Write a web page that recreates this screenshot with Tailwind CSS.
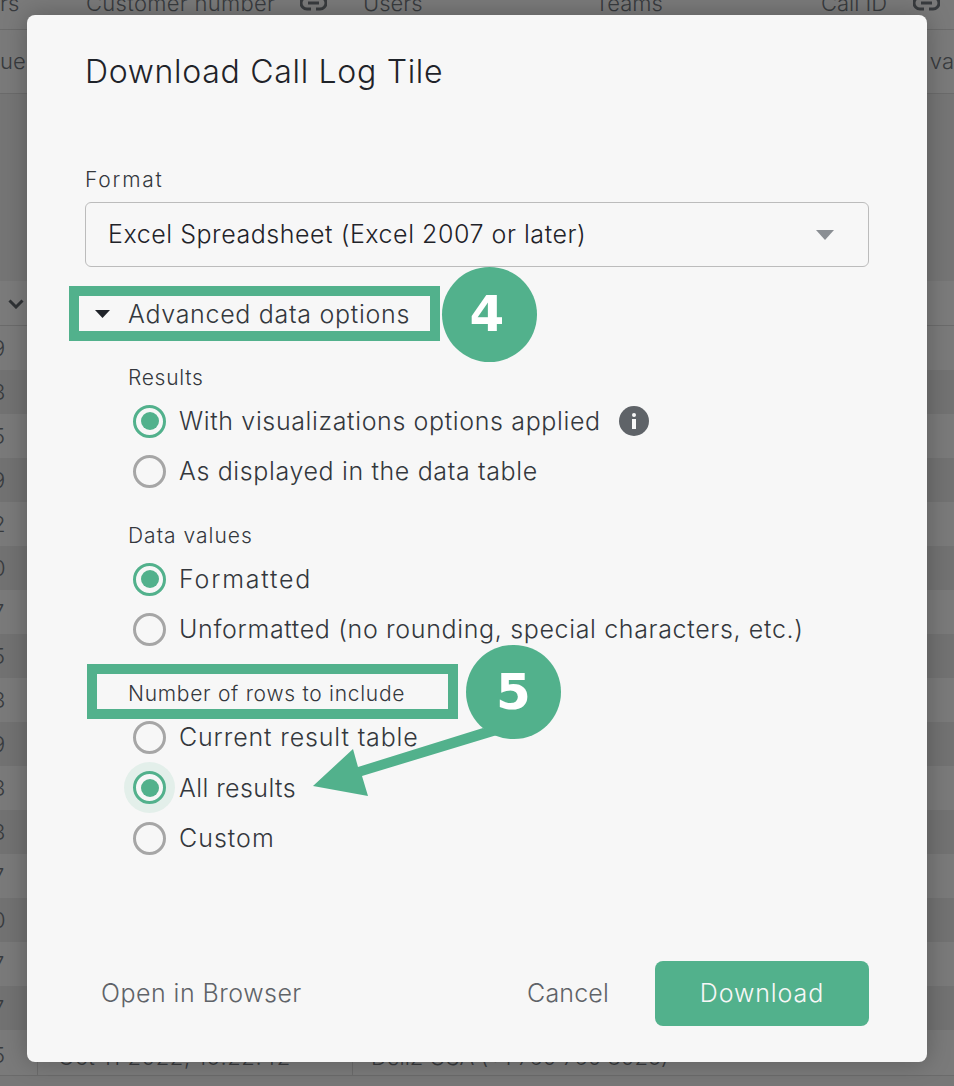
<!DOCTYPE html>
<html lang="en">
<head>
    <meta charset="UTF-8">
    <meta name="viewport" content="width=device-width, initial-scale=1.0">
    <title>Download Call Log Tile</title>
    <script src="https://cdn.jsdelivr.net/npm/@tailwindcss/browser@4"></script>
</head>
<body class="bg-[#777777] font-['Inter',sans-serif] font-light">
<div class="relative w-[954px] h-[1086px] overflow-hidden">

    <!-- table behind the modal -->
    <div class="text-[22px] text-[#383b3e]">
        <div class="relative h-[42px] -mt-[12px] border-b border-[#6b6b6b] bg-[#7a7a7a] leading-[30px] whitespace-nowrap flex">
            <span class="w-[86px] text-right pr-[70px]">rs</span>
            <span class="w-[214px] tracking-[0.3px]">Customer number</span>
            <svg class="mt-[5px] w-[63px] pr-[36px]" height="20" viewBox="0 0 27 20" fill="none" stroke="#383b3e" stroke-width="3"><path d="M11 4H7a6 6 0 0 0 0 12h4M16 4h4a6 6 0 0 1 0 12h-4M8 10h11"/></svg>
            <span class="w-[232px]">Users</span>
            <span class="w-[226px]">Teams</span>
            <span class="w-[92px]">Call ID</span>
            <svg class="mt-[5px]" width="27" height="20" viewBox="0 0 27 20" fill="none" stroke="#383b3e" stroke-width="3"><path d="M11 4H7a6 6 0 0 0 0 12h4M16 4h4a6 6 0 0 1 0 12h-4M8 10h11"/></svg>
        </div>
        <div class="flex items-center justify-between h-[64px] border-b border-[#6b6b6b] bg-[#7a7a7a]">
            <span>ue</span><span>va</span>
        </div>
        <div class="h-[187px] bg-[#757575]"></div>
        <div class="flex items-center h-[45px] border-b border-[#6b6b6b] bg-[#7b7b7b] pl-[8px] pt-[2px]">
            <svg width="16" height="10" viewBox="0 0 16 10" fill="none" stroke="#2f3235" stroke-width="3"><path d="M1.5 1.5 8 8l6.500-6.500"/></svg>
        </div>
        <div class="h-[44px] bg-[#7a7a7a] leading-[44px] -ml-[8px]">9</div>
        <div class="h-[44px] bg-[#727272] leading-[44px] -ml-[8px]">3</div>
        <div class="h-[44px] bg-[#7a7a7a] leading-[44px] -ml-[8px]">5</div>
        <div class="h-[44px] bg-[#727272] leading-[44px] -ml-[8px]">9</div>
        <div class="h-[44px] bg-[#7a7a7a] leading-[44px] -ml-[8px]">2</div>
        <div class="h-[44px] bg-[#727272] leading-[44px] -ml-[8px]">0</div>
        <div class="h-[44px] bg-[#7a7a7a] leading-[44px] -ml-[8px]">7</div>
        <div class="h-[44px] bg-[#727272] leading-[44px] -ml-[8px]">5</div>
        <div class="h-[44px] bg-[#7a7a7a] leading-[44px] -ml-[8px]">3</div>
        <div class="h-[44px] bg-[#727272] leading-[44px] -ml-[8px]">9</div>
        <div class="h-[44px] bg-[#7a7a7a] leading-[44px] -ml-[8px]">3</div>
        <div class="h-[44px] bg-[#727272] leading-[44px] -ml-[8px]">3</div>
        <div class="h-[44px] bg-[#7a7a7a] leading-[44px] -ml-[8px]">7</div>
        <div class="h-[44px] bg-[#727272] leading-[44px] -ml-[8px]">0</div>
        <div class="h-[44px] bg-[#7a7a7a] leading-[44px] -ml-[8px]">7</div>
        <div class="h-[44px] bg-[#727272] leading-[44px] -ml-[8px]">7</div>
        <div class="flex h-[46px] bg-[#7a7a7a] leading-[54px] border-b border-[#6b6b6b] whitespace-nowrap">
            <span class="w-[46px] -ml-[8px] border-r border-[#6b6b6b] leading-[50px]">5</span>
            <span class="w-[315px] pl-[20px] border-r border-[#6b6b6b] tracking-[0.6px]">Oct 11 2022, 15:22:42</span>
            <span class="pl-[18px]">Dell2 USA (+1 760 760 3025)</span>
        </div>
    </div>

    <!-- modal -->
    <div class="absolute left-[27px] top-[15px] w-[900px] h-[1047px] bg-[#f7f7f7] rounded-lg shadow-[0_0_24px_rgba(0,0,0,0.25)] pl-[58px] pr-[58px] pt-[36px] pb-[36px] flex flex-col text-[#34383d]">
        <h1 class="h-[40px] leading-[42px] text-[32px] text-[#1f2329] tracking-[0.7px]">Download Call Log Tile</h1>

        <label class="mt-[76px] h-[24px] leading-[26px] text-[21px] tracking-[1.8px]">Format</label>
        <div class="mt-[11px] h-[65px] border border-[#bcbcbc] rounded-md flex items-center justify-between pl-[22px] pr-[34px] text-[25px] text-[#1f2329] tracking-[0.54px]">
            <span>Excel Spreadsheet (Excel 2007 or later)</span>
            <svg width="18" height="10" viewBox="0 0 18 10"><path d="M0 0h18L9 10z" fill="#8a8e93"/></svg>
        </div>

        <div class="mt-[32px] h-[30px] flex items-center text-[25px] tracking-[0.7px]">
            <svg class="ml-[10px] mr-[18px]" width="15" height="8" viewBox="0 0 15 8"><path d="M0 0h15L7.500 8z" fill="#1f2329"/></svg>
            <span class="mt-[2px]">Advanced data options</span>
        </div>

        <div class="mt-[36px] ml-[43px] h-[24px] leading-[26px] text-[21px] tracking-[0.7px]">Results</div>
        <div class="mt-[7px] ml-[48px] h-[50px] flex items-center gap-[13px] text-[25px] tracking-[0.63px]">
            <span class="w-[33px] h-[33px] rounded-full border-[3px] border-[#52b18c] flex items-center justify-center"><span class="w-[18px] h-[18px] rounded-full bg-[#52b18c]"></span></span>
            <span class="mt-[2px]">With visualizations options applied</span>
            <span class="ml-[5px] w-[30px] h-[30px] rounded-full bg-[#5f6368] flex items-center justify-center">
                <svg width="6" height="16" viewBox="0 0 6 16" fill="#f7f7f7"><circle cx="3" cy="2" r="2"/><path d="M1 6h4v10H1z"/></svg>
            </span>
        </div>
        <div class="ml-[48px] h-[50px] flex items-center gap-[13px] text-[25px] tracking-[0.63px]">
            <span class="w-[33px] h-[33px] rounded-full border-[3px] border-[#a6a6a6]"></span>
            <span class="mt-[2px]">As displayed in the data table</span>
        </div>

        <div class="mt-[27px] ml-[43px] h-[24px] leading-[26px] text-[21px] tracking-[1px]">Data values</div>
        <div class="mt-[7px] ml-[48px] h-[50px] flex items-center gap-[13px] text-[25px] tracking-[1.8px]">
            <span class="w-[33px] h-[33px] rounded-full border-[3px] border-[#52b18c] flex items-center justify-center"><span class="w-[18px] h-[18px] rounded-full bg-[#52b18c]"></span></span>
            <span class="mt-[2px]">Formatted</span>
        </div>
        <div class="ml-[48px] h-[50px] flex items-center gap-[13px] text-[25px] tracking-[0.65px]">
            <span class="w-[33px] h-[33px] rounded-full border-[3px] border-[#a6a6a6]"></span>
            <span class="mt-[2px]">Unformatted (no rounding, special characters, etc.)</span>
        </div>

        <div class="mt-[27px] ml-[43px] h-[24px] leading-[26px] text-[21px] tracking-[0.72px]">Number of rows to include</div>
        <div class="mt-[7px] ml-[48px] h-[50px] flex items-center gap-[13px] text-[25px] tracking-[0.85px]">
            <span class="w-[33px] h-[33px] rounded-full border-[3px] border-[#a6a6a6]"></span>
            <span class="mt-[2px]">Current result table</span>
        </div>
        <div class="ml-[48px] h-[51px] flex items-center gap-[13px] text-[25px] tracking-[0.4px]">
            <span class="w-[33px] h-[33px] rounded-full border-[3px] border-[#52b18c] flex items-center justify-center shadow-[0_0_0_9px_#e3efea]"><span class="w-[18px] h-[18px] rounded-full bg-[#52b18c]"></span></span>
            <span class="mt-[2px]">All results</span>
        </div>
        <div class="ml-[48px] h-[50px] flex items-center gap-[13px] text-[25px] tracking-[1px]">
            <span class="w-[33px] h-[33px] rounded-full border-[3px] border-[#a6a6a6]"></span>
            <span class="mt-[2px]">Custom</span>
        </div>

        <div class="mt-auto flex items-center text-[25px] text-[#5f6368]">
            <button class="ml-[16px] tracking-[0.47px]">Open in Browser</button>
            <button class="ml-auto mr-[46px] tracking-[0.17px]">Cancel</button>
            <button class="w-[214px] h-[65px] rounded-lg bg-[#52b18c] text-[#f7f7f7] tracking-[0.9px]">Download</button>
        </div>
    </div>

    <!-- annotations -->
    <div class="absolute left-[69px] top-[286px] w-[371px] h-[55px] border-[10px] border-[#52b18c]"></div>
    <div class="absolute left-[442px] top-[267px] w-[95px] h-[95px] rounded-full bg-[#52b18c] text-white flex items-center justify-center pr-[5px] text-[50px] font-bold font-['DejaVu_Sans',sans-serif]">4</div>
    <div class="absolute left-[87px] top-[664px] w-[371px] h-[55px] border-[10px] border-[#52b18c]"></div>
    <svg class="absolute left-[300px] top-[720px]" width="210" height="90" viewBox="0 0 210 90" fill="#52b18c">
        <path d="M183 8 58 47 53 29 13 66 68 76 62 56 197 15z"/>
    </svg>
    <div class="absolute left-[466px] top-[645px] w-[95px] h-[94px] rounded-full bg-[#52b18c] text-white flex items-center justify-center text-[50px] font-bold font-['DejaVu_Sans',sans-serif]">5</div>
</div>
</body>
</html>
